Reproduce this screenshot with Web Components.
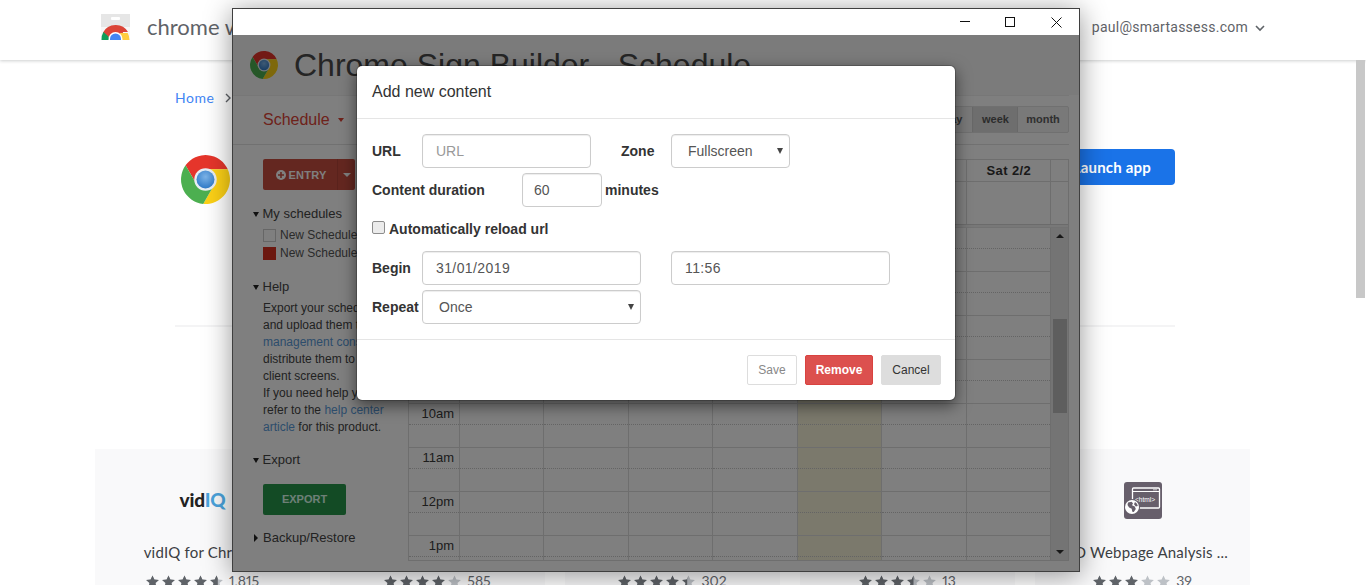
<!DOCTYPE html>
<html lang="en">
<head>
<meta charset="utf-8">
<title>Chrome Sign Builder - Schedule</title>
<style>
html,body{margin:0;padding:0;height:585px;overflow:hidden;background:#fff}
body{font-family:"Liberation Sans",Arial,sans-serif}
</style>
</head>
<body>
<cws-page></cws-page>
<app-window></app-window>
<page-scrollbar></page-scrollbar>
<script>
function el(name, css, html){
  customElements.define(name, class extends HTMLElement{
    constructor(){super();this.attachShadow({mode:'open'});}
    connectedCallback(){
      const body = typeof html==='function' ? html(this) : html;
      this.shadowRoot.innerHTML = '<style>'+css+'</style>'+body;
    }
  });
}
const caret = 'display:inline-block;width:0;height:0;';

el('chrome-logo', ':host{display:block;line-height:0}', h=>{
  const s=h.getAttribute('size')||48;
  return `<svg width="${s}" height="${s}" viewBox="0 0 48 48">
  <defs><radialGradient id="b" cx=".5" cy=".35" r=".7"><stop offset="0" stop-color="#7db4e8"/><stop offset="1" stop-color="#2a76c6"/></radialGradient></defs>
  <path fill="#e5352b" d="M24 14L45.8 14A24 24 0 0 0 4.44 10.12L15.34 29A10 10 0 0 1 24 14Z"/>
  <path fill="#fcd116" d="M32.66 29L21.76 47.88A24 24 0 0 0 45.8 14L24 14A10 10 0 0 1 32.66 29Z"/>
  <path fill="#4caf50" d="M15.34 29L4.44 10.12A24 24 0 0 0 21.76 47.88L32.66 29A10 10 0 0 1 15.34 29Z"/>
  <circle cx="24" cy="24" r="11" fill="#e8eef4"/><circle cx="24" cy="24" r="8.8" fill="url(#b)"/></svg>`;
});

el('store-logo', ':host{display:block;line-height:0}', `<svg width="29" height="26" viewBox="0 0 29 26">
  <defs><clipPath id="c"><rect width="29" height="26"/></clipPath></defs>
  <rect width="29" height="26" fill="#f7f7f7"/><rect width="29" height="13" fill="#e6e6e6"/>
  <rect x="10" y="3" width="9" height="3" rx="1" fill="#fff"/>
  <g clip-path="url(#c)">
   <path fill="#db4437" d="M14.5 11A14 14 0 0 0 2 18.5L9 24H21L22 18H27A14 14 0 0 0 14.5 11Z"/>
   <path fill="#0f9d58" d="M2.4 18A14 14 0 0 0 .5 26H9L7 22Z"/>
   <path fill="#ffcd40" d="M19 19H26.7A14 14 0 0 1 28.5 26H20Z"/>
   <circle cx="14.5" cy="25" r="7" fill="#fff"/><circle cx="14.5" cy="25" r="5.5" fill="#4285f4"/>
  </g></svg>`);

el('html-logo', ':host{display:block;line-height:0}', `<svg width="38" height="37" viewBox="0 0 38 37">
  <rect width="38" height="37" rx="3" fill="#675f6b"/>
  <rect x="8.5" y="6" width="27" height="20" rx="1" fill="none" stroke="#fff" stroke-width="1.3"/>
  <path d="M9 9.5H35" stroke="#fff" stroke-width="1"/><path d="M29 7.8h4" stroke="#ccc" stroke-width="1"/>
  <text x="11" y="19.5" font-family="'Liberation Sans',sans-serif" font-size="6.6" fill="#fff">&lt;html&gt;</text>
  <circle cx="8" cy="25" r="8" fill="#675f6b"/><circle cx="8" cy="25" r="7" fill="#fff"/>
  <path fill="#675f6b" d="M4 20.5l3.5-.8 1.5 1.6-1 2 2.8 1.2 1 2.4-2 3.2-1.5-.4-.6-3-2.6-1.2-1.6-2.4zM11 20l2 1.8.8 2.2-2 .4-1.8-2.2z"/></svg>`);

el('star-rating', `:host{display:flex;align-items:center;justify-content:center;gap:6px;font:14px/16px Lato,"Open Sans",sans-serif;font-variant-numeric:proportional-nums;color:#5f6368}svg{display:block}`, h=>{
  const v=parseFloat(h.getAttribute('value')), c=h.getAttribute('count');
  const star='M6.5 .4L8.4 4.6 12.9 5 9.5 8 10.5 12.5 6.5 10.1 2.5 12.5 3.5 8 .1 5 4.6 4.6Z';
  let g='';
  for(let i=0;i<5;i++){
    const f=Math.max(0,Math.min(1,v-i));
    g+=`<g transform="translate(${i*16} 0)"><path d="${star}" fill="#bdc1c6"/>`+
       (f>0?`<clipPath id="s${i}"><rect width="${13*f}" height="13"/></clipPath><path d="${star}" fill="#5f6368" clip-path="url(#s${i})"/>`:'')+`</g>`;
  }
  return `<svg width="77" height="13" viewBox="0 0 77 13">${g}</svg><span>${c}</span>`;
});

el('related-card', `:host{display:block;width:215px;height:180px;background:#f9f9fa;box-sizing:border-box;padding-top:32px;text-align:center}
 .logo{height:38px;display:flex;align-items:center;justify-content:center}
 .t{margin-top:23px;font:15px/20px Lato,"Open Sans",sans-serif;color:#3c4043;letter-spacing:.2px;white-space:nowrap}
 star-rating{margin-top:11px}`,
 h=>`<div class="logo"><slot></slot></div><div class="t">${h.getAttribute('name')}</div><star-rating value="${h.getAttribute('value')}" count="${h.getAttribute('count')}"></star-rating>`);

el('cws-header', `:host{display:flex;align-items:center;height:60px;box-sizing:border-box;padding:0 101px 0 101px;background:#fff;box-shadow:0 1px 3px rgba(60,64,67,.25);position:relative;color:#5f6368}
 .n{margin-left:17px;font:22px/28px Lato,"Open Sans",sans-serif;flex:1;margin-top:-6px}
 .e{font:14px/20px Roboto,sans-serif;letter-spacing:.25px;margin-top:-6px}
 svg{margin-left:7px;margin-top:-4px}
 store-logo{margin-top:-6px}`,
 `<store-logo></store-logo><div class="n">chrome web store</div><div class="e">paul@smartassess.com</div>
  <svg width="10" height="7" viewBox="0 0 10 7"><path d="M1 1l4 4 4-4" fill="none" stroke="#5f6368" stroke-width="1.6"/></svg>`);

el('cws-page', `:host{display:block;height:585px;overflow:hidden}
 main{margin-left:175px;width:1000px}
 .crumb{display:flex;align-items:center;height:20px;margin-top:28px;font:14px/20px Lato,"Open Sans",sans-serif;color:#4285f4;letter-spacing:.5px}
 .crumb svg{margin-left:11px}
 .detail{display:flex;align-items:flex-start;justify-content:space-between;margin-top:41px;height:176px;margin-left:0}
 chrome-logo{margin:6px 0 0 6px}
 .launch{background:#1a73e8;color:#fff;border-radius:4px;height:36px;box-sizing:border-box;padding:0 24px;font:700 15px/36px Lato,"Open Sans",sans-serif;letter-spacing:.2px}
 hr{margin:0;border:0;height:2px;background:#f4f4f5}
 .cards{display:flex;gap:20px;margin:122px 0 0 95px}`,
 `<cws-header></cws-header>
 <main>
  <div class="crumb">Home<svg width="7" height="10" viewBox="0 0 7 10"><path d="M1 1l4 4-4 4" fill="none" stroke="#5f6368" stroke-width="1.4"/></svg></div>
  <div class="detail"><chrome-logo size="49"></chrome-logo><div class="launch">Launch app</div></div>
  <hr>
 </main>
 <div class="cards">
  <related-card name="vidIQ for Chrome" value="4.6" count="1,815"><span style="font:900 19px/24px Lato,sans-serif;color:#222;letter-spacing:-.2px">vid<span style="color:#4ba3dc">IQ</span></span></related-card>
  <related-card name="Tag Assistant" value="4" count="585"></related-card>
  <related-card name="Web Analytics" value="4.4" count="302"></related-card>
  <related-card name="Page Inspector" value="3.5" count="13"></related-card>
  <related-card name="SEO Webpage Analysis ..." value="3" count="39"><html-logo></html-logo></related-card>
 </div>`);

el('page-scrollbar', `:host{position:fixed;right:1px;top:60px;width:9px;height:238px;background:#c8c8c8}`, ``);

el('win-titlebar', `:host{display:flex;justify-content:flex-end;height:26px;background:#fff;flex:none}
 span{width:46px;display:flex;align-items:center;justify-content:center}`,
 `<span style="padding-left:1px;box-sizing:border-box"><svg width="10" height="10"><path d="M0 4.5H10" stroke="#111"/></svg></span>
  <span><svg width="10" height="10"><rect x=".5" y=".5" width="9" height="9" fill="none" stroke="#111"/></svg></span>
  <span><svg width="11" height="11"><path d="M.5 .5L10.5 10.5M10.5 .5L.5 10.5" stroke="#111"/></svg></span>`);

el('app-window', `:host{position:absolute;left:232px;top:8px;width:848px;height:564px;box-sizing:border-box;border:1px solid #3f3f3f;display:flex;flex-direction:column;box-shadow:0 3px 26px rgba(0,0,0,.42);background:#fff}`,
 `<win-titlebar></win-titlebar><sign-builder></sign-builder>`);

el('sign-builder', `:host{display:block;position:relative;flex:1;overflow:hidden;background:#fff;color:#444}
 header{display:flex;align-items:center;height:60px;box-sizing:border-box;padding-left:17px;background:#f6f6f6}
 h1{margin:0 0 0 16px;font:400 32px/40px "Liberation Sans",Arial,sans-serif;color:#4a4a4a}
 nav{display:flex;align-items:center;height:50px;box-sizing:border-box;margin-right:10px;padding-left:30px;border-bottom:1px solid #e2e2e2;border-top:1px solid #eee;}
 nav b{font:400 16px/20px "Liberation Sans",Arial,sans-serif;color:#dc4437}
 nav i{${caret}border:3px solid transparent;border-top:4px solid #dc4437;border-bottom:0;margin-left:8px}
 .views{margin-left:auto;margin-top:-1px;display:flex;height:27px;border:1px solid #e0e0e0;border-radius:2px;box-sizing:border-box;font:700 11px/25px "Liberation Sans",Arial,sans-serif;color:#606060;background:#f2f2f2}
 .views span{text-align:center;width:38px}
 .views .on{background:#dcdcdc;border:solid #d0d0d0;border-width:0 1px;box-sizing:border-box;width:46px;color:#585858;padding-left:1px}
 .views span:last-child{width:50px}
 .body{display:flex;padding-top:14px;align-items:flex-start}
 .backdrop{position:absolute;inset:0;background:rgba(0,0,0,.5)}
 content-modal{position:absolute;left:123px;top:30px}`,
 `<header><chrome-logo size="28"></chrome-logo><h1>Chrome Sign Builder - Schedule</h1></header>
  <nav><b>Schedule</b><i></i><div class="views"><span>day</span><span class="on">week</span><span>month</span></div></nav>
  <div class="body"><sb-sidebar></sb-sidebar><sb-calendar></sb-calendar></div>
  <div class="backdrop"></div>
  <content-modal></content-modal>`);

el('sb-section', `:host{display:flex;align-items:center;height:18px;margin-left:-10px;font:13px/18px "Liberation Sans",Arial,sans-serif;color:#444}
 i{${caret}border:3.5px solid transparent;border-top:5px solid #222;border-bottom:0;margin-right:3.5px}
 i.r{border:4px solid transparent;border-left:4px solid #222;border-right:0;margin:0 5px 0 1px}`,
 h=>`<i class="${h.hasAttribute('closed')?'r':''}"></i><slot></slot>`);

el('sb-sidebar', `:host{display:block;width:175px;flex:none;box-sizing:border-box;padding-left:30px;font:12px/17px "Liberation Sans",Arial,sans-serif;color:#444;white-space:nowrap}
 .entry{display:flex;height:31px;width:92px;border-radius:2px;background:#c94e40;color:#fff;font:700 11px/31px "Liberation Sans",Arial,sans-serif;overflow:hidden}
 .entry .m{width:75px;display:flex;align-items:center;justify-content:center;gap:3px;border-right:1px solid #b54538;box-sizing:border-box;letter-spacing:.2px;padding:1px 0 0 2px}
 .entry .d{flex:1;display:flex;align-items:center;justify-content:center}
 .entry .d i{${caret}border:4px solid transparent;border-top:4px solid #fff;border-bottom:0}
 .s1{margin-top:15px}
 .s2{margin-top:16px}
 .s3{margin-top:15px}
 .s4{margin-top:14px}
 .row{display:flex;align-items:center;height:18px;gap:4px;color:#555}
 .row i{width:13px;height:13px;box-sizing:border-box;border:1px solid #ccc}
 .row i.on{background:#d83020;border-color:#d83020}
 .rows{margin-top:3px}
 p{margin:4px 0 0}
 a{color:#5a9ad8;text-decoration:none}
 .export{margin-top:15px;width:83px;height:31px;border-radius:2px;background:#27974a;color:#dfe;text-align:center;font:700 11px/31px "Liberation Sans",Arial,sans-serif}`,
 `<div class="entry"><div class="m"><svg width="10" height="10" viewBox="0 0 10 10"><circle cx="5" cy="5" r="5" fill="#fff"/><path d="M5 2v6M2 5h6" stroke="#c94e40" stroke-width="1.6"/></svg>ENTRY</div><div class="d"><i></i></div></div>
 <sb-section class="s1">My schedules</sb-section>
 <div class="rows"><div class="row"><i></i>New Schedule</div><div class="row"><i class="on"></i>New Schedule</div></div>
 <sb-section class="s2">Help</sb-section>
 <p>Export your schedules<br>and upload them to the<br><a>management console</a> to<br>distribute them to<br>client screens.<br>If you need help you can<br>refer to the <a>help center<br>article</a> for this product.</p>
 <sb-section class="s3">Export</sb-section>
 <div class="export">EXPORT</div>
 <sb-section class="s4" closed>Backup/Restore</sb-section>`);

el('sb-calendar', `:host{display:block;width:661px;box-sizing:border-box;border:1px solid #dcdcdc;border-bottom-width:1px;font:13px/20px "Liberation Sans",Arial,sans-serif;color:#444;height:402px;overflow:hidden}
 .head,.allday{display:grid;grid-template-columns:51px repeat(7,84.45px) 1fr}
 .head{height:21px;border-bottom:1px solid #dcdcdc}
 .head span{border-right:1px solid #dcdcdc;text-align:center;font:700 13px/21px "Liberation Sans",Arial,sans-serif;color:#333;white-space:nowrap;overflow:hidden;letter-spacing:.4px;padding-left:1px}
 .head span:last-child,.allday span:last-child{border-right:0}
 .allday{height:42px}
 .allday span{border-right:1px solid #dcdcdc}
 .band{height:4px;box-sizing:border-box;border-top:1px solid #d6d6d6;border-bottom:1px solid #e4e4e4;background:#f0f0f0}
 .scroll{display:flex;height:333px}
 .grid{flex:1;overflow:hidden}
 .hour{display:grid;grid-template-columns:51px repeat(7,84.45px);height:44px;box-sizing:border-box;border-bottom:1px solid #dcdcdc}
 .hour>div{border-right:1px solid #dcdcdc;position:relative}
 .hour>div:last-child{border-right:1px solid #dcdcdc}
 .hour u{display:block;height:22px;box-sizing:border-box;border-bottom:1px dotted #c8c8c8;text-decoration:none;text-align:right;padding-right:5px;color:#3a3a3a;line-height:22px;margin-top:-1px}
 .today{background:#f7f2d8}
 .bar{width:17px;flex:none;background:#e8e8e8;box-sizing:border-box;padding:0 1px 0 2px;display:flex;flex-direction:column;align-items:center}
 .bar i{${caret}border:4px solid transparent}
 .bar .up{border-bottom:4px solid #333;border-top:0;margin-top:6px}
 .bar .dn{border-top:4px solid #333;border-bottom:0;margin-top:auto;margin-bottom:7px}
 .bar s{display:block;width:100%;height:94px;background:#bcbcbc;margin-top:81px}`,
 ()=>{
  const days=['Sun 1/27','Mon 1/28','Tue 1/29','Wed 1/30','Thu 1/31','Fri 2/1','Sat 2/2'];
  const hours=['6am','7am','8am','9am','10am','11am','12pm','1pm'];
  const rows=hours.map(x=>`<div class="hour"><div><u>${x}</u></div>`+days.map((d,i)=>`<div class="${i==4?'today':''}"><u></u></div>`).join('')+`</div>`).join('');
  return `<div class="head"><span></span>${days.map(d=>`<span>${d}</span>`).join('')}<span></span></div>
  <div class="allday"><span></span>${days.map((d,i)=>`<span class="${i==4?'today':''}"></span>`).join('')}<span></span></div>
  <div class="band"></div>
  <div class="scroll"><div class="grid">${rows}</div><div class="bar"><i class="up"></i><s></s><i class="dn"></i></div></div>`;
 });

el('form-box', `:host{display:flex;align-items:center;height:34px;box-sizing:border-box;border:1px solid #ccc;border-radius:4px;box-shadow:inset 0 1px 1px rgba(0,0,0,.075);background:#fff;padding-left:13px;font:14px/20px "Liberation Sans",Arial,sans-serif;color:#555;flex:none}
 :host([placeholder]){color:#999}
 :host([select]){padding-left:16px;position:relative}
 i{${caret}border:3px solid transparent;border-top:6px solid #444;border-bottom:0;margin-left:auto;margin-right:6px}`,
 h=>`<slot></slot>`+(h.hasAttribute('select')?'<i></i>':''));

el('content-modal', `:host{display:block;width:600px;box-sizing:border-box;background:#fff;border:1px solid rgba(0,0,0,.2);background-clip:padding-box;border-radius:6px;box-shadow:0 5px 15px rgba(0,0,0,.5);color:#333;font:14px/20px "Liberation Sans",Arial,sans-serif}
 .h{height:53px;box-sizing:border-box;border-bottom:1px solid #e5e5e5;padding:0 14px 0 15px;font:16px/52px "Liberation Sans",Arial,sans-serif}
 .b{padding:15px 14px 15px 15px;display:flex;flex-direction:column;gap:5px}
 .r{display:flex;align-items:center;height:34px}
 .l{width:50px;flex:none;font-weight:700;white-space:nowrap}
 .gap{margin-left:30px}
 .chk{height:20px;margin:7px 0 7px;gap:4px}
 .chk i{width:13px;height:13px;box-sizing:border-box;border:1px solid #8d8d8d;border-radius:2px;background:#ececec;margin-top:-4px}
 .f{height:61px;box-sizing:border-box;border-top:1px solid #e5e5e5;padding:15px 14px;display:flex;justify-content:flex-end;gap:8px}
 .btn{height:30px;box-sizing:border-box;border:1px solid #ddd;border-radius:2px;font:12px/28px "Liberation Sans",Arial,sans-serif;text-align:center;color:#888;background:#fff}
 .rem{background:#dc504e;border-color:#d9423f;color:#fff;font-weight:700}
 .can{background:#ddd;border-color:#ddd;color:#333}`,
 `<div class="h">Add new content</div>
 <div class="b">
  <div class="r"><div class="l">URL</div><form-box placeholder style="width:169px">URL</form-box><div class="l gap">Zone</div><form-box select style="width:119px">Fullscreen</form-box></div>
  <div class="r"><div class="l" style="width:150px">Content duration</div><form-box style="width:80px;padding-left:11px">60</form-box><b style="margin-left:3px">minutes</b></div>
  <div class="r chk"><i></i><b>Automatically reload url</b></div>
  <div class="r"><div class="l">Begin</div><form-box style="width:219px;letter-spacing:.4px">31/01/2019</form-box><form-box style="width:219px;margin-left:30px;letter-spacing:.4px">11:56</form-box></div>
  <div class="r"><div class="l">Repeat</div><form-box select style="width:219px">Once</form-box></div>
 </div>
 <div class="f"><div class="btn" style="width:50px">Save</div><div class="btn rem" style="width:68px">Remove</div><div class="btn can" style="width:60px">Cancel</div></div>`);
</script>
</body>
</html>
